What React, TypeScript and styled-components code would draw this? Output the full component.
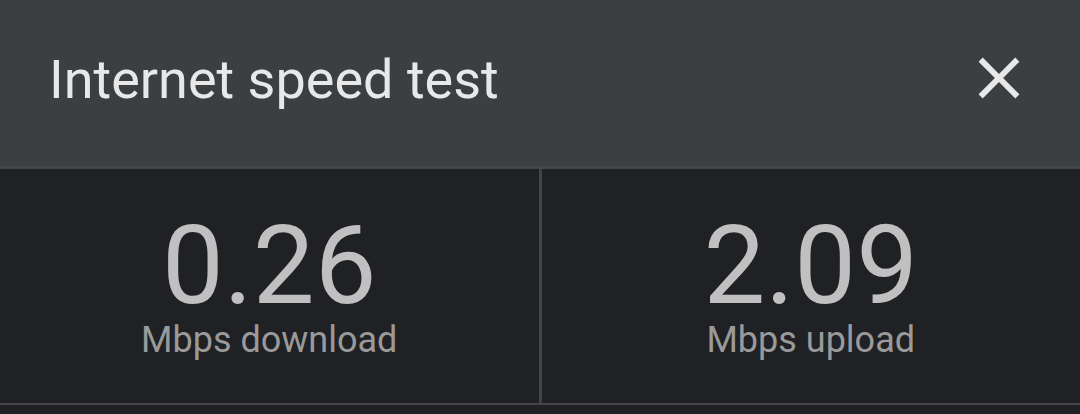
import React from "react";
import styled, { createGlobalStyle } from "styled-components";

const Global = createGlobalStyle`
  html, body { margin: 0; padding: 0; background: #202124; }
  body { font-family: Roboto, "Noto Sans", sans-serif; }
`;

const Dialog = styled.div`
  width: 1080px;
  height: 414px;
  background: #202124;
  display: flex;
  flex-direction: column;
`;

const Header = styled.header`
  box-sizing: border-box;
  height: 169px;
  flex-shrink: 0;
  background: #3c3f42;
  border-bottom: 3px solid #444648;
  display: flex;
  align-items: flex-start;
  justify-content: space-between;
  padding: 43px 46px 0 49px;
`;

const Title = styled.h1`
  margin: 5px 0 0 0;
  font-family: Roboto, sans-serif;
  font-weight: 400;
  font-size: 54px;
  line-height: 64px;
  color: #e8e8e8;
`;

const CloseButton = styled.button`
  width: 70px;
  height: 70px;
  padding: 0;
  border: 0;
  background: transparent;
  color: #e8e8e8;
  display: flex;
  cursor: pointer;
  svg { width: 70px; height: 70px; display: block; }
`;

const Results = styled.div`
  display: grid;
  grid-template-columns: 1fr 3px 1fr;
  height: 234px;
  flex-shrink: 0;
  border-bottom: 2px solid #454545;
`;

const Divider = styled.div`
  background: #444444;
`;

const Stat = styled.div`
  display: flex;
  flex-direction: column;
  align-items: center;
  padding-top: 43px;
`;

const Value = styled.div`
  font-size: 110px;
  line-height: 108px;
  font-weight: 400;
  color: #c0c0c0;
`;

const Label = styled.div`
  font-size: 36px;
  line-height: 40px;
  color: #9a9a9a;
`;

const stats = [
  { value: "0.26", label: "Mbps download" },
  { value: "2.09", label: "Mbps upload" },
];

export default function App() {
  return (
    <>
      <Global />
      <Dialog>
        <Header>
          <Title>Internet speed test</Title>
          <CloseButton aria-label="Close">
            <svg viewBox="0 0 24 24" fill="currentColor">
              <path d="M19 6.41L17.59 5 12 10.59 6.41 5 5 6.41 10.59 12 5 17.59 6.41 19 12 13.41 17.59 19 19 17.59 13.41 12z" />
            </svg>
          </CloseButton>
        </Header>
        <Results>
          <Stat>
            <Value>{stats[0].value}</Value>
            <Label>{stats[0].label}</Label>
          </Stat>
          <Divider />
          <Stat>
            <Value>{stats[1].value}</Value>
            <Label>{stats[1].label}</Label>
          </Stat>
        </Results>
      </Dialog>
    </>
  );
}
